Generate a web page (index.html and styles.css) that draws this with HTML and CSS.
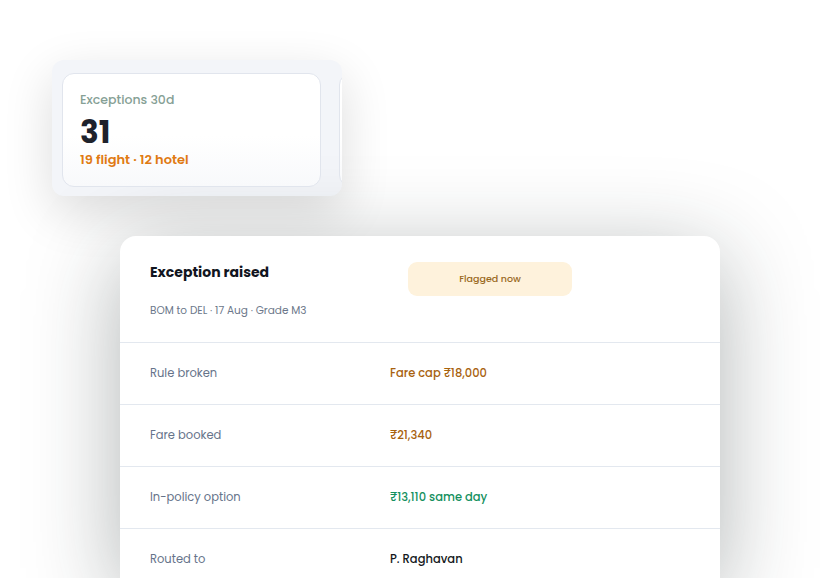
FILE: index.html
```html
<!DOCTYPE html>
<html>
<head>
<meta charset="utf-8">
<link rel="stylesheet" href="styles.css">
</head>
<body>
<div class="page">
  <div class="panel">
    <div class="stat-card">
      <div class="stat-label">Exceptions 30d</div>
      <div class="stat-value">31</div>
      <div class="stat-sub">19 flight · 12 hotel</div>
    </div>
    <div class="stat-card"></div>
  </div>

  <div class="card">
    <div class="card-head">
      <div class="head-text">
        <div class="title">Exception raised</div>
        <div class="subtitle">BOM to DEL · 17 Aug · Grade M3</div>
      </div>
      <div class="badge">Flagged now</div>
    </div>
    <div class="row">
      <div class="label">Rule broken</div>
      <div class="value warn">Fare cap ₹18,000</div>
    </div>
    <div class="row">
      <div class="label">Fare booked</div>
      <div class="value warn">₹21,340</div>
    </div>
    <div class="row">
      <div class="label">In-policy option</div>
      <div class="value ok">₹13,110 same day</div>
    </div>
    <div class="row">
      <div class="label">Routed to</div>
      <div class="value dark">P. Raghavan</div>
    </div>
  </div>
</div>
</body>
</html>
```

FILE: styles.css
```css
html, body {
  margin: 0;
  padding: 0;
  background: #ffffff;
  overflow: hidden;
}
body {
  font-family: "Poppins", "Open Sans", "DejaVu Sans", sans-serif;
  width: 840px;
  height: 578px;
}
.page {
  padding-top: 60px;
}
.panel {
  margin-left: 52px;
  width: 270px;
  height: 114px;
  padding: 13px 10px 9px 10px;
  background: #f3f5f9;
  border-radius: 12px;
  display: flex;
  gap: 18px;
  overflow: hidden;
  box-shadow: 0 16px 50px rgba(0, 0, 0, 0.14);
}
.stat-card {
  flex: 0 0 259px;
  box-sizing: border-box;
  height: 114px;
  background: linear-gradient(#ffffff 55%, #f8f9fb);
  border: 1px solid #e1e5ed;
  border-radius: 12px;
  padding: 16px 17px;
}
.stat-label {
  font-size: 12.5px;
  line-height: 20px;
  font-weight: 500;
  color: #86a095;
}
.stat-value {
  font-size: 31px;
  line-height: 38px;
  font-weight: 700;
  color: #1e222c;
  margin-top: 3px;
}
.stat-sub {
  font-size: 13px;
  line-height: 18px;
  font-weight: 600;
  color: #e07a12;
}
.card {
  margin-top: 40px;
  margin-left: 120px;
  width: 600px;
  height: 342px;
  overflow: hidden;
  background: #ffffff;
  border-radius: 16px 16px 0 0;
  box-shadow: 0 20px 90px rgba(30, 40, 40, 0.35);
}
.card-head {
  display: flex;
  padding: 26px 30px 22px 30px;
  border-bottom: 1px solid #e3e8ef;
}
.head-text {
  width: 258px;
}
.title {
  font-size: 14px;
  line-height: 20px;
  font-weight: 700;
  color: #111520;
}
.subtitle {
  margin-top: 20px;
  font-size: 10.5px;
  line-height: 18px;
  color: #6b778a;
}
.badge {
  width: 164px;
  height: 34px;
  border-radius: 9px;
  background: #fef2dc;
  color: #9a6a1f;
  font-size: 9.5px;
  font-weight: 500;
  display: flex;
  align-items: center;
  justify-content: center;
}
.row {
  display: flex;
  align-items: center;
  height: 61px;
  padding: 0 30px;
  border-bottom: 1px solid #e3e8ef;
}
.label {
  width: 240px;
  font-size: 11.5px;
  color: #66738a;
}
.value {
  font-size: 11.5px;
  font-weight: 500;
}
.warn { color: #a8620e; }
.ok { color: #14905e; }
.dark { color: #141820; }
```
